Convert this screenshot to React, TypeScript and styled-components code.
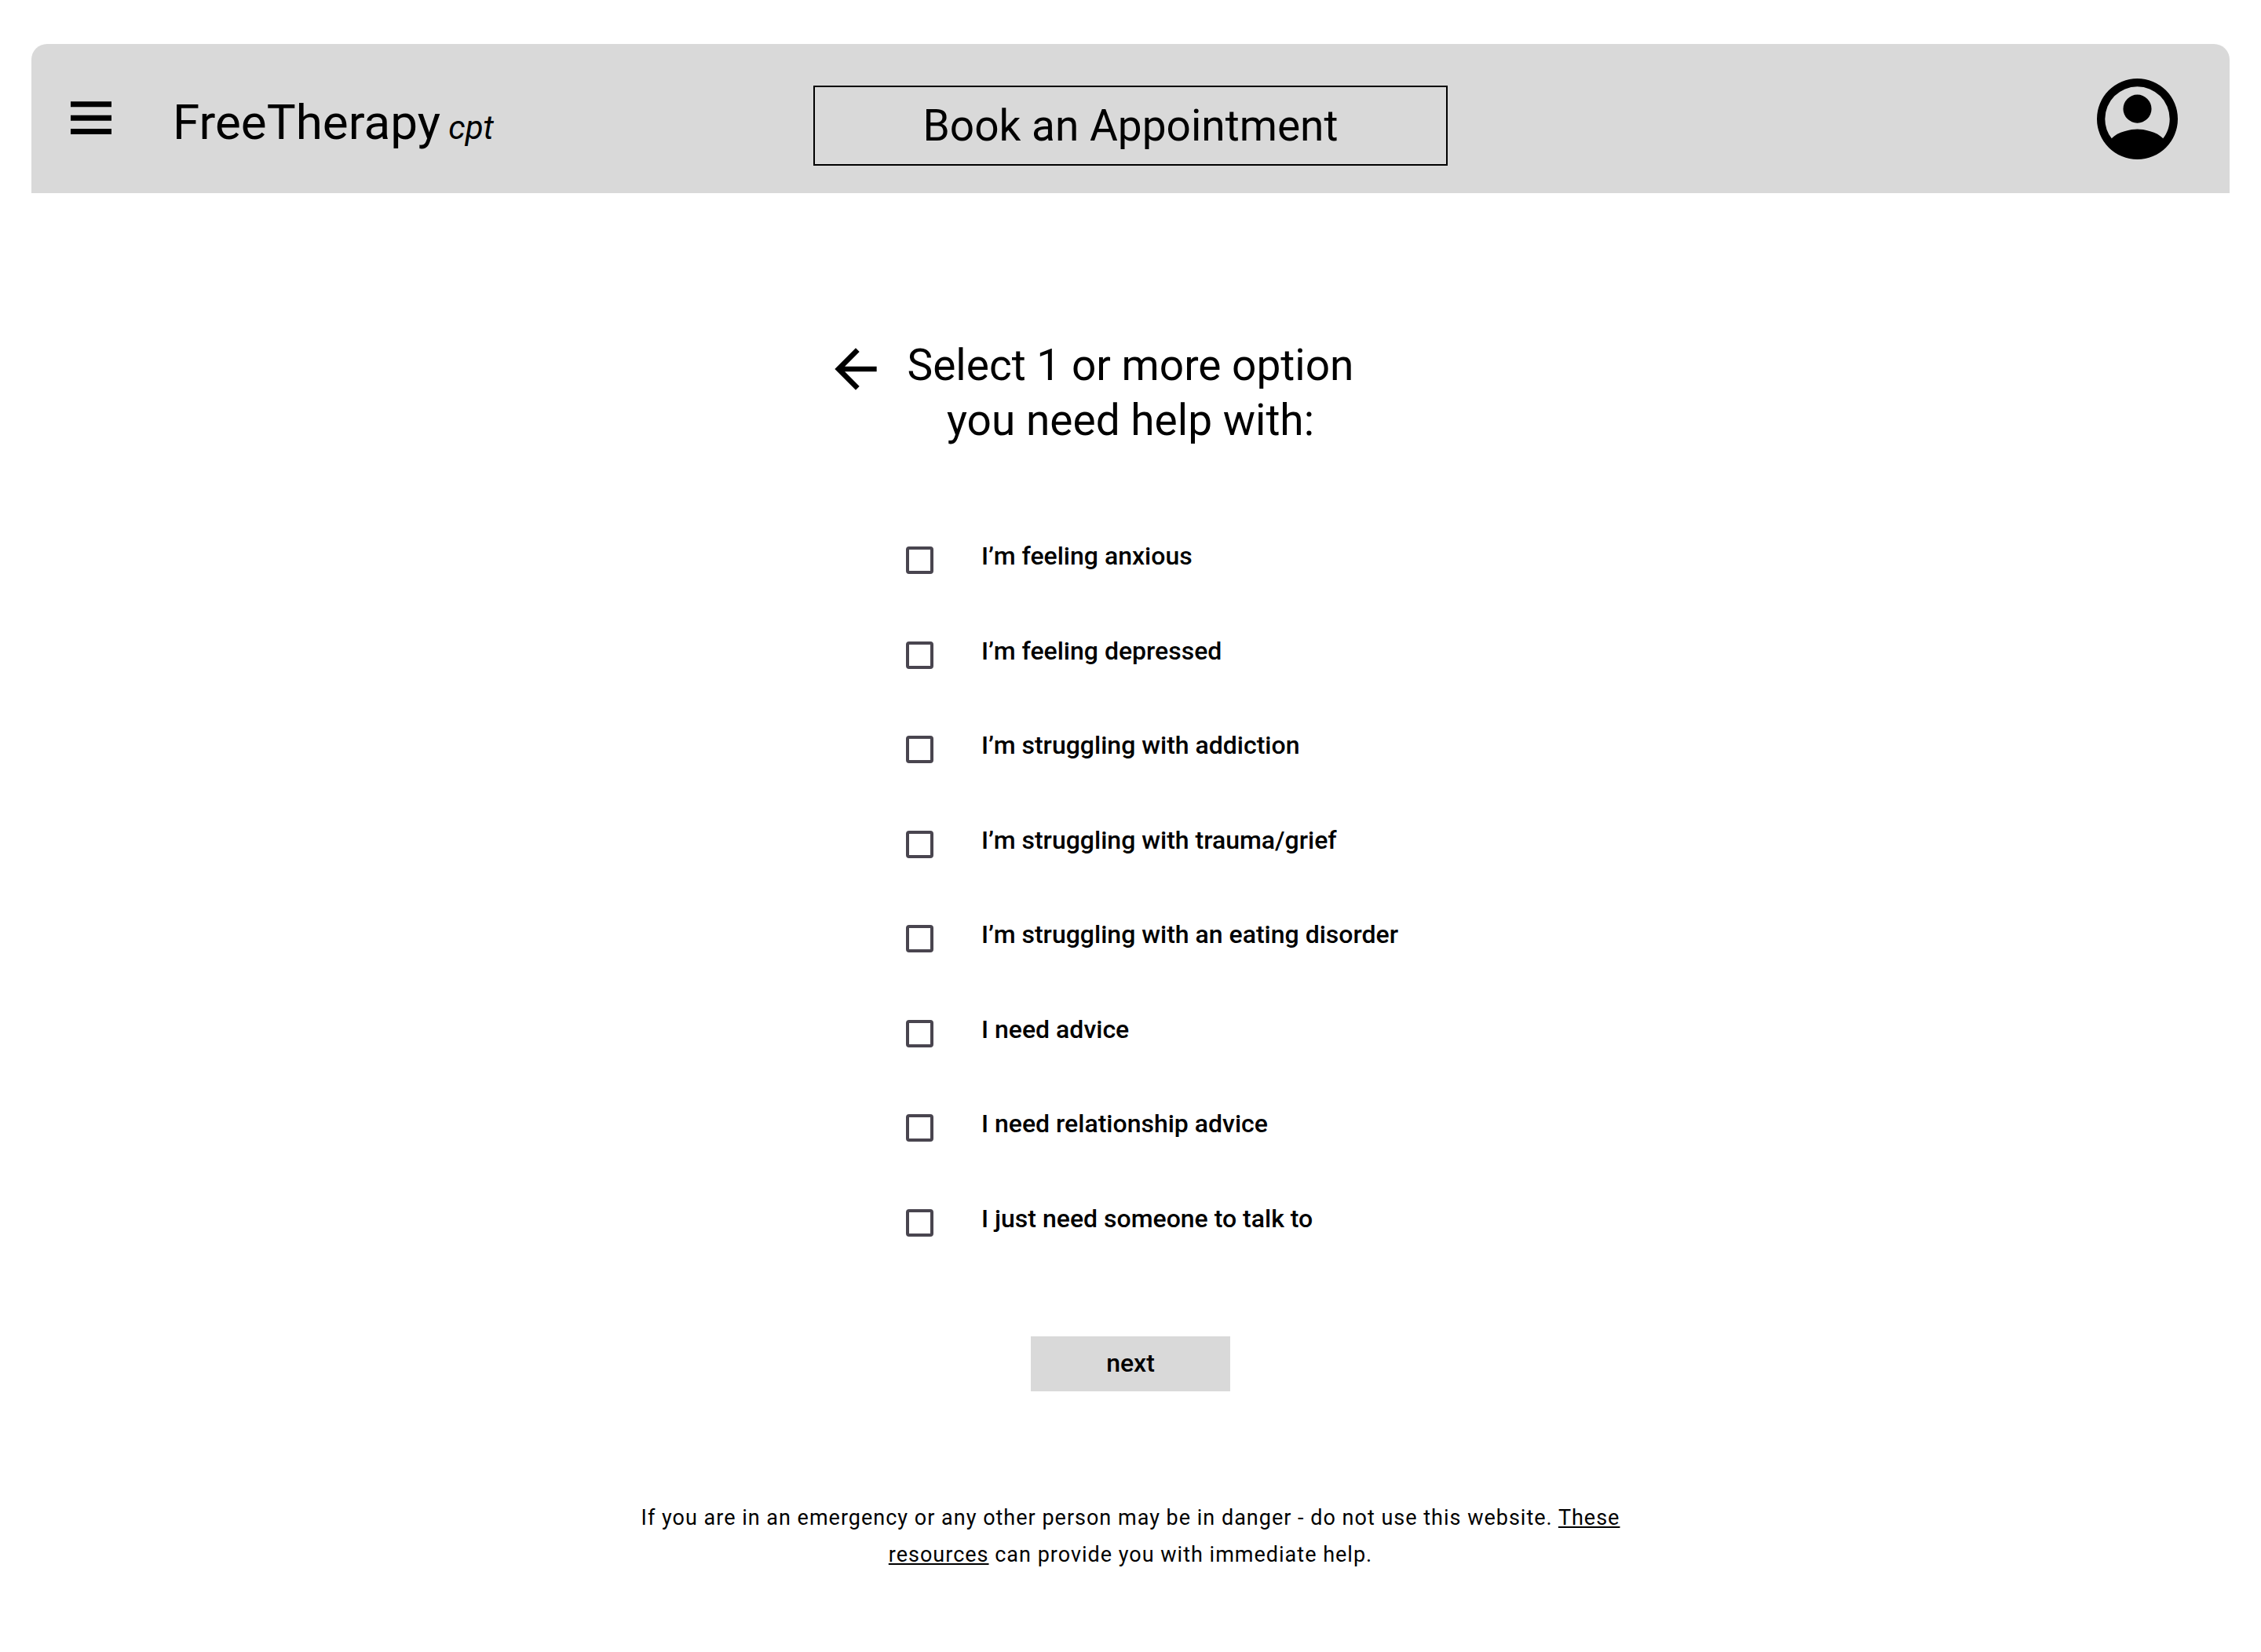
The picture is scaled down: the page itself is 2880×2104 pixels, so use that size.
import React from "react";
import styled, { createGlobalStyle } from "styled-components";

const GlobalStyle = createGlobalStyle`
  *, *::before, *::after {
    box-sizing: border-box;
  }
  body {
    margin: 0;
    background: #ffffff;
    color: #000000;
    font-family: Roboto, "Liberation Sans", sans-serif;
  }
  button {
    font: inherit;
    color: inherit;
    cursor: pointer;
  }
`;

const Page = styled.div`
  padding: 56px 40px 92px;
`;

const Header = styled.header`
  display: grid;
  grid-template-columns: 1fr auto 1fr;
  align-items: center;
  min-height: 190px;
  padding: 35px 50px;
  background: #d9d9d9;
  border-radius: 20px 20px 0 0;
`;

const HeaderStart = styled.div`
  display: flex;
  align-items: center;
  gap: 78px;
`;

const IconButton = styled.button`
  display: flex;
  padding: 0;
  border: 0;
  background: none;
`;

const ProfileButton = styled(IconButton)`
  justify-self: end;
  padding-right: 16px;
`;

const Brand = styled.a`
  padding-top: 16px;
  color: inherit;
  text-decoration: none;
  font-size: 62px;
  line-height: 76px;
  white-space: nowrap;
`;

const BrandSuffix = styled.em`
  font-size: 42px;
`;

const BookButton = styled.button`
  align-self: end;
  width: 808px;
  height: 102px;
  padding: 0;
  border: 2px solid #000000;
  background: transparent;
  font-size: 55px;
  line-height: 66px;
`;

const Form = styled.form`
  display: flex;
  flex-direction: column;
  align-items: center;
  padding-top: 184px;
`;

const TitleRow = styled.div`
  display: grid;
  grid-template-columns: 1fr auto 1fr;
  align-items: start;
  column-gap: 26px;
  width: 100%;
`;

const BackButton = styled(IconButton)`
  justify-self: end;
`;

const Title = styled.h1`
  margin: 0;
  font-size: 55px;
  font-weight: 400;
  line-height: 70px;
  text-align: center;
`;

const OptionList = styled.ul`
  display: flex;
  flex-direction: column;
  justify-content: space-between;
  width: 680px;
  min-height: 890px;
  margin: 115px 0 127px;
  padding: 0 0 0 54px;
  list-style: none;
`;

const Option = styled.label`
  display: flex;
  align-items: flex-end;
  gap: 61px;
  font-size: 32px;
  font-weight: 500;
  line-height: 46px;
  white-space: nowrap;
  cursor: pointer;
`;

const Checkbox = styled.input`
  appearance: none;
  flex: none;
  width: 35px;
  height: 35px;
  margin: 0;
  border: 4px solid #49454f;
  border-radius: 4px;

  &:checked {
    background: #49454f;
    box-shadow: inset 0 0 0 4px #ffffff;
  }
`;

const NextButton = styled.button`
  width: 254px;
  height: 70px;
  padding: 0 0 2px;
  border: 0;
  background: #d9d9d9;
  font-size: 32px;
  font-weight: 500;
`;

const Notice = styled.footer`
  max-width: 1280px;
  margin: 138px auto 0;
  font-size: 27px;
  line-height: 47px;
  letter-spacing: 1px;
  text-align: center;

  a {
    color: inherit;
  }
`;

const options = [
  "I’m feeling anxious",
  "I’m feeling depressed",
  "I’m struggling with addiction",
  "I’m struggling with trauma/grief",
  "I’m struggling with an eating disorder",
  "I need advice",
  "I need relationship advice",
  "I just need someone to talk to",
];

const MenuIcon = () => (
  <svg width="52" height="44" viewBox="0 0 52 44" aria-hidden="true">
    <path d="M0 .3h52v7H0zM0 17.7h52v7H0zM0 35h52v7H0z" />
  </svg>
);

const ProfileIcon = () => (
  <svg width="103" height="103" viewBox="2 2 20 20" aria-hidden="true">
    <path d="M12 2A10 10 0 0 0 2 12a10 10 0 0 0 10 10 10 10 0 0 0 10-10A10 10 0 0 0 12 2m0 2a8 8 0 0 1 8 8c0 1.82-.61 3.5-1.64 4.83C16.93 15.09 13.46 14.5 12 14.5s-4.93.59-6.36 2.33A7.93 7.93 0 0 1 4 12a8 8 0 0 1 8-8m0 2a3.5 3.5 0 0 0-3.5 3.5A3.5 3.5 0 0 0 12 13a3.5 3.5 0 0 0 3.5-3.5A3.5 3.5 0 0 0 12 6z" />
  </svg>
);

const BackIcon = () => (
  <svg width="80" height="80" viewBox="0 0 24 24" aria-hidden="true">
    <path d="M20 11H7.83l5.59-5.59L12 4l-8 8 8 8 1.41-1.41L7.83 13H20z" />
  </svg>
);

export default function App() {
  return (
    <>
      <GlobalStyle />
      <Page>
        <Header>
          <HeaderStart>
            <IconButton type="button" aria-label="Menu">
              <MenuIcon />
            </IconButton>
            <Brand href="#">
              FreeTherapy<BrandSuffix> cpt</BrandSuffix>
            </Brand>
          </HeaderStart>
          <BookButton type="button">Book an Appointment</BookButton>
          <ProfileButton type="button" aria-label="Profile">
            <ProfileIcon />
          </ProfileButton>
        </Header>

        <main>
          <Form onSubmit={(event) => event.preventDefault()}>
            <TitleRow>
              <BackButton type="button" aria-label="Back">
                <BackIcon />
              </BackButton>
              <Title>
                Select 1 or more option
                <br />
                you need help with:
              </Title>
            </TitleRow>
            <OptionList>
              {options.map((text) => (
                <li key={text}>
                  <Option>
                    <Checkbox type="checkbox" name="help" value={text} />
                    {text}
                  </Option>
                </li>
              ))}
            </OptionList>
            <NextButton type="submit">next</NextButton>
          </Form>
        </main>

        <Notice>
          If you are in an emergency or any other person may be in danger - do
          not use this website. <a href="#resources">These resources</a> can
          provide you with immediate help.
        </Notice>
      </Page>
    </>
  );
}
